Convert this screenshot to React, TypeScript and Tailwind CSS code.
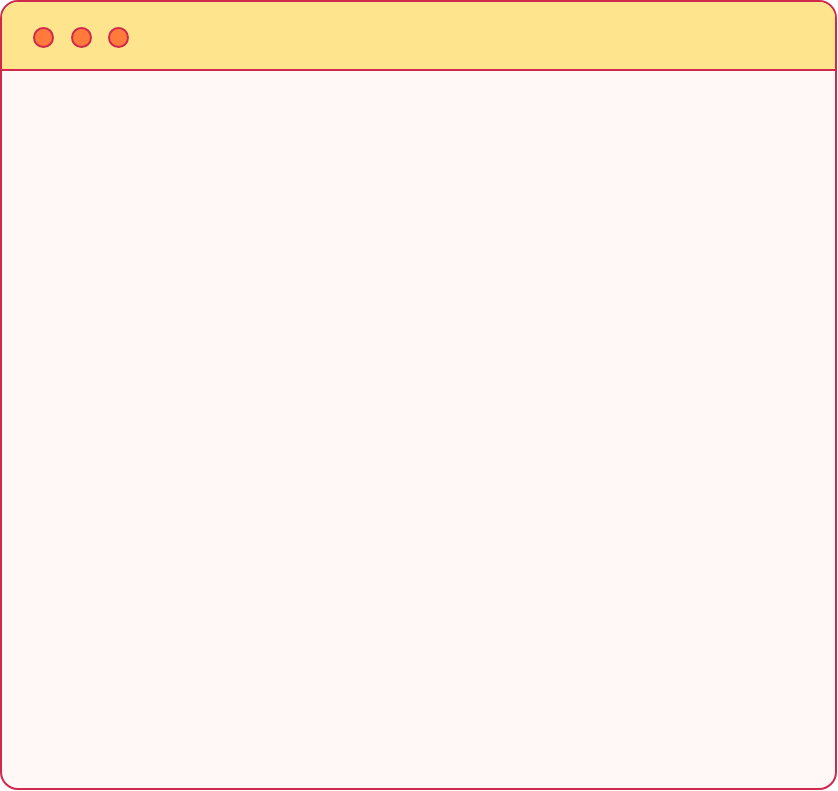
import React from 'react';

const Dot: React.FC = () => (
  <span className="block h-[21px] w-[21px] rounded-full border-2 border-[#cf2a4c] bg-[#ff7a3b]" />
);

export default function App() {
  return (
    <div className="h-[791px] w-[838px] bg-white">
      <div className="flex h-[790px] w-[837px] flex-col overflow-hidden rounded-[18px] border-2 border-[#d1284e] bg-[#fff8f7]">
        {/* title bar */}
        <div className="flex h-[69px] shrink-0 items-center gap-[16.5px] border-b-2 border-[#d1284e] bg-[#fee48c] pl-[31px] pt-[3px]">
          <Dot />
          <Dot />
          <Dot />
        </div>
        <div className="flex-1" />
      </div>
    </div>
  );
}
